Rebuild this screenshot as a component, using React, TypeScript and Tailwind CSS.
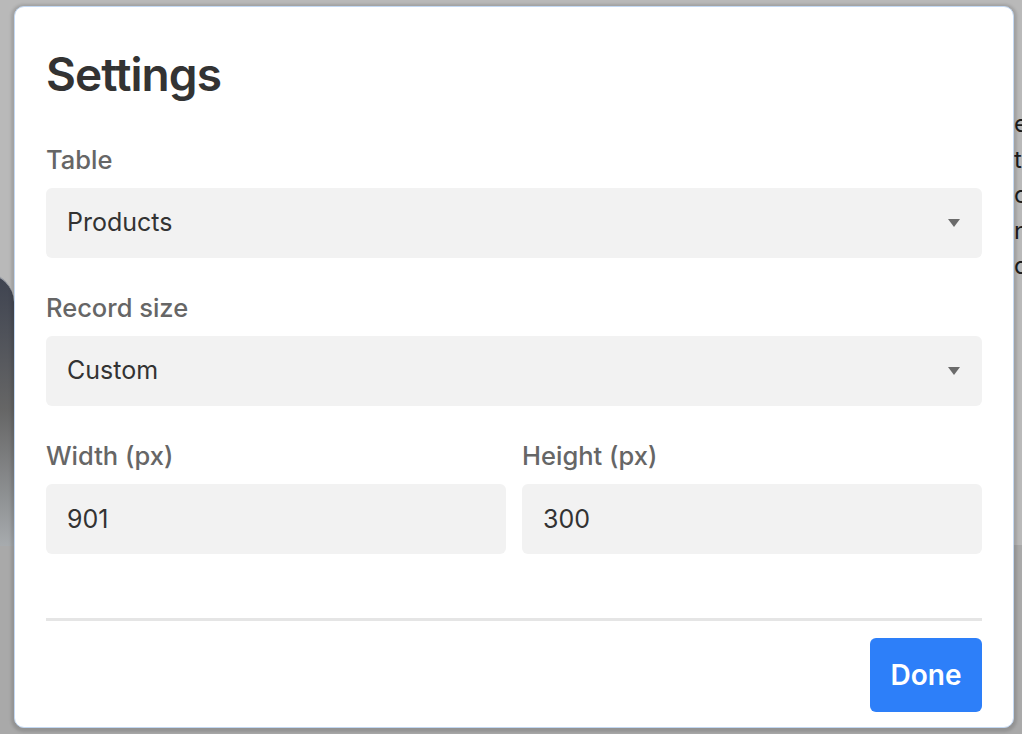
import { ChangeEvent, useState } from 'react'

const font = { fontFamily: 'Inter, "Noto Sans", sans-serif' }

function Caret() {
    return (
        <svg width="12" height="8" viewBox="0 0 12 8" className="shrink-0">
            <path d="M0 0 H12 L6 8 Z" fill="#6b6b6b" />
        </svg>
    )
}

function Field({ label, children }: { label: string; children: React.ReactNode }) {
    return (
        <div className="flex flex-col">
            <label className="text-[25.5px] leading-[32px] font-medium text-[#666666] mb-3">{label}</label>
            {children}
        </div>
    )
}

function SelectBox({ value }: { value: string }) {
    return (
        <div className="h-[70px] rounded-[6px] bg-[#f2f2f2] flex items-center justify-between pl-[21px] pr-[22px]">
            <span className="text-[25px] text-[#333333]">{value}</span>
            <Caret />
        </div>
    )
}

function NumberBox({ value, onChange }: { value: string; onChange: (e: ChangeEvent<HTMLInputElement>) => void }) {
    return (
        <input
            value={value}
            onChange={onChange}
            className="h-[70px] w-full rounded-[6px] bg-[#f2f2f2] pl-[21px] text-[25px] text-[#333333] outline-none"
        />
    )
}

export default function App() {
    const [width, setWidth] = useState('901')
    const [height, setHeight] = useState('300')

    return (
        <div className="relative w-[1022px] h-[734px] overflow-hidden bg-[#b9b9b9]" style={font}>
            {/* page behind the overlay */}
            <div className="absolute left-0 right-0 top-[545px] bottom-0 bg-[#a9a9a9]" />
            <div className="absolute left-[-40px] top-[272px] w-[54px] h-[274px] rounded-tr-[30px] bg-gradient-to-b from-[#3e4350] via-[#666666] to-[#a7abae] border-t-2 border-[#9a9ea6]" />
            <div className="absolute left-[1014px] top-[106px] text-[24px] leading-[35.5px] text-[#1c1c1c] whitespace-nowrap">
                <div>es</div>
                <div>to</div>
                <div>co</div>
                <div>nu</div>
                <div>qu</div>
            </div>

            {/* dialog */}
            <div className="absolute left-[14px] top-[6px] w-[1000px] h-[722px] bg-white rounded-[10px] border border-[#c3d8f2] shadow-[0_1px_3px_3px_rgba(0,0,0,0.13)] px-[31px] pt-[39px] pb-[15px] flex flex-col">
                <h1 className="text-[46px] leading-[56px] font-semibold tracking-[-0.02em] text-[#333333]">Settings</h1>

                <div className="mt-[42px] flex flex-col gap-[34px]">
                    <Field label="Table">
                        <SelectBox value="Products" />
                    </Field>
                    <Field label="Record size">
                        <SelectBox value="Custom" />
                    </Field>
                    <div className="grid grid-cols-2 gap-4">
                        <Field label="Width (px)">
                            <NumberBox value={width} onChange={e => setWidth(e.target.value)} />
                        </Field>
                        <Field label="Height (px)">
                            <NumberBox value={height} onChange={e => setHeight(e.target.value)} />
                        </Field>
                    </div>
                </div>

                <div className="mt-auto h-[3px] bg-[#e5e5e5]" />
                <div className="flex justify-end mt-[17px]">
                    <button className="w-[112px] h-[74px] rounded-[6px] bg-[#2d7ff9] text-white text-[28px] font-semibold">
                        Done
                    </button>
                </div>
            </div>
        </div>
    )
}
